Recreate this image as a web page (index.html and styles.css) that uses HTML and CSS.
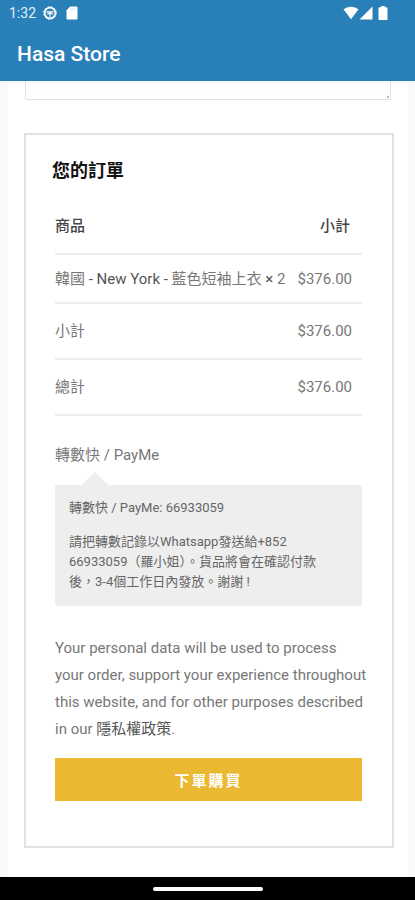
FILE: index.html
```html
<!DOCTYPE html>
<html lang="zh-Hant">
<head>
<meta charset="utf-8">
<meta name="viewport" content="width=device-width, initial-scale=1">
<title>Hasa Store</title>
<link rel="stylesheet" href="styles.css">
</head>
<body>
<header class="app-header">
  <div class="status-bar">
    <div class="status-group">
      <span class="clock">1:32</span>
      <svg class="status-icon" width="14" height="14" viewBox="0 0 14 14" aria-hidden="true">
        <circle cx="7" cy="7" r="5.4" fill="none" stroke="currentColor" stroke-width="1.8"/>
        <circle cx="7" cy="7" r="6.3" fill="none" stroke="currentColor" stroke-width="1" stroke-dasharray="1.6 1.7"/>
        <path d="M3.400 5.800h7.200M4.200 8.200L7 7l2.800 1.200M7 7v4.200" fill="none" stroke="currentColor" stroke-width="1.2"/>
      </svg>
      <svg class="card-icon" width="12" height="14" viewBox="0 0 12 14" aria-hidden="true">
        <path d="M4.200 0.500H10.500Q11.500 .5 11.500 1.500V12.500Q11.500 13.500 10.500 13.500H1.500Q.5 13.500 .5 12.500V4.200Z" fill="currentColor"/>
        <path d="M5 2.200v2M7 2.200v2M9 2.200v2" stroke="#c4dbec" stroke-width=".8"/>
      </svg>
    </div>
    <div class="status-group status-right">
      <svg width="16" height="14" viewBox="0 0 16 14" aria-hidden="true">
        <path d="M.5 3.300Q3.500.8 8 .8T15.500 3.300L8 13.200Z" fill="currentColor"/>
      </svg>
      <svg width="14" height="14" viewBox="0 0 14 14" aria-hidden="true">
        <path d="M13.500.5V13.500H.5Z" fill="currentColor"/>
      </svg>
      <svg class="battery" width="10" height="14" viewBox="0 0 10 14" aria-hidden="true">
        <path d="M3.200 0H6.800V1.300H8.500Q9.500 1.300 9.500 2.300V13Q9.500 14 8.500 14H1.500Q.5 14 .5 13V2.300Q.5 1.300 1.500 1.300H3.200Z" fill="currentColor"/>
      </svg>
    </div>
  </div>
  <h1 class="app-title">Hasa Store</h1>
</header>

<main class="sheet">
  <textarea class="notes" aria-label="訂單備註"></textarea>

  <section class="order">
    <h2 class="order-title">您的訂單</h2>
    <table class="order-table">
      <thead>
        <tr><th scope="col">商品</th><th scope="col">小計</th></tr>
      </thead>
      <tbody>
        <tr class="product"><td>韓國 <span class="dark">- New York -</span> 藍色短袖上衣 <span class="dark">×</span> 2</td><td>$376.00</td></tr>
      </tbody>
      <tfoot>
        <tr><th scope="row">小計</th><td>$376.00</td></tr>
        <tr><th scope="row">總計</th><td>$376.00</td></tr>
      </tfoot>
    </table>

    <p class="method">轉數快 / PayMe</p>
    <div class="method-box">
      <p>轉數快 / PayMe: 66933059</p>
      <p>請把轉數記錄以Whatsapp發送給+852 66933059（羅小姐）。貨品將會在確認付款後，3-4個工作日內發放。謝謝 !</p>
    </div>

    <p class="privacy">Your personal data will be used to process your order, support your experience throughout this website, and for other purposes described in our <a href="#">隱私權政策</a>.</p>
    <button class="submit" type="button">下單購買</button>
  </section>
</main>

<footer class="nav-bar"><span class="home-indicator"></span></footer>
</body>
</html>
```
FILE: styles.css
```css
* {
  box-sizing: border-box;
}

body {
  margin: 0;
  min-height: 100vh;
  display: flex;
  flex-direction: column;
  background: #fafafa;
  color: #777;
  font-family: Roboto, "Noto Sans CJK TC", sans-serif;
  font-size: 15px;
}

h1, h2, p {
  margin: 0;
}

.app-header {
  background: #2980b9;
  color: #fff;
  height: 81px;
}

.status-bar {
  display: flex;
  justify-content: space-between;
  align-items: center;
  height: 26px;
  padding: 0 27px 0 9px;
}

.status-group {
  display: flex;
  align-items: center;
}

.status-group svg {
  display: block;
}

.clock {
  font-size: 14px;
  color: #e3eef7;
}

.status-icon {
  margin-left: 7px;
}

.card-icon {
  margin-left: 9px;
}

.battery {
  margin-left: 5px;
}

.app-title {
  padding: 0 17px;
  font-size: 21px;
  font-weight: 500;
  line-height: 56px;
}

.sheet {
  flex: 1;
  margin: 0 7px 0 8px;
  padding-bottom: 28px;
  background: #fff;
}

.notes {
  display: block;
  width: calc(100% - 34px);
  height: 19px;
  margin: 0 17px;
  border: 1px solid #e2e2e2;
  border-top: 0;
  border-radius: 0 0 2px 2px;
  background: #fefefe linear-gradient(#bbb, #bbb) right 1px bottom 1px / 2px 2px no-repeat;
  resize: none;
}

.order {
  margin: 33px 14px 0 16px;
  padding: 24px 30px 45px 29px;
  border: 2px solid #e2e2e2;
}

.order-title {
  margin-left: -3px;
  color: #111;
  font-size: 18px;
  font-weight: 700;
  line-height: 24px;
}

.order-table {
  width: 100%;
  margin-top: 15px;
  border-collapse: collapse;
}

.order-table th,
.order-table td {
  height: 56px;
  padding: 0;
  border-bottom: 2px solid #eee;
  font-weight: 400;
  line-height: 24px;
  text-align: left;
  white-space: nowrap;
}

.order-table th:last-child,
.order-table td:last-child {
  padding-right: 10px;
  text-align: right;
}

.order-table thead th {
  color: #444;
  font-weight: 500;
}

.order-table thead th:last-child {
  padding-right: 12px;
}

.order-table .product td {
  height: 49px;
}

.dark {
  color: #555;
}

.method {
  margin-top: 27px;
  line-height: 24px;
}

.method-box {
  position: relative;
  margin-top: 18px;
  padding: 13px 28px 14px 14px;
  border-radius: 2px;
  background: #eee;
  color: #666;
  font-size: 13px;
  line-height: 20px;
}

.method-box::before {
  content: "";
  position: absolute;
  left: 27px;
  bottom: 100%;
  border: 13px solid transparent;
  border-top: 0;
  border-bottom-color: #eee;
}

.method-box p + p {
  margin-top: 14px;
}

.privacy {
  margin: 29px -6px 0 0;
  line-height: 27px;
}

.privacy a {
  color: #555;
  text-decoration: none;
}

.submit {
  display: block;
  width: 100%;
  height: 43px;
  margin-top: 15px;
  padding: 0;
  border: 0;
  background: #ebb832;
  color: #fff;
  font: inherit;
  font-weight: 700;
  letter-spacing: 2px;
}

.nav-bar {
  display: flex;
  justify-content: center;
  align-items: center;
  height: 23px;
  background: #000;
}

.home-indicator {
  width: 110px;
  height: 4px;
  border-radius: 2px;
  background: #fff;
}
```
